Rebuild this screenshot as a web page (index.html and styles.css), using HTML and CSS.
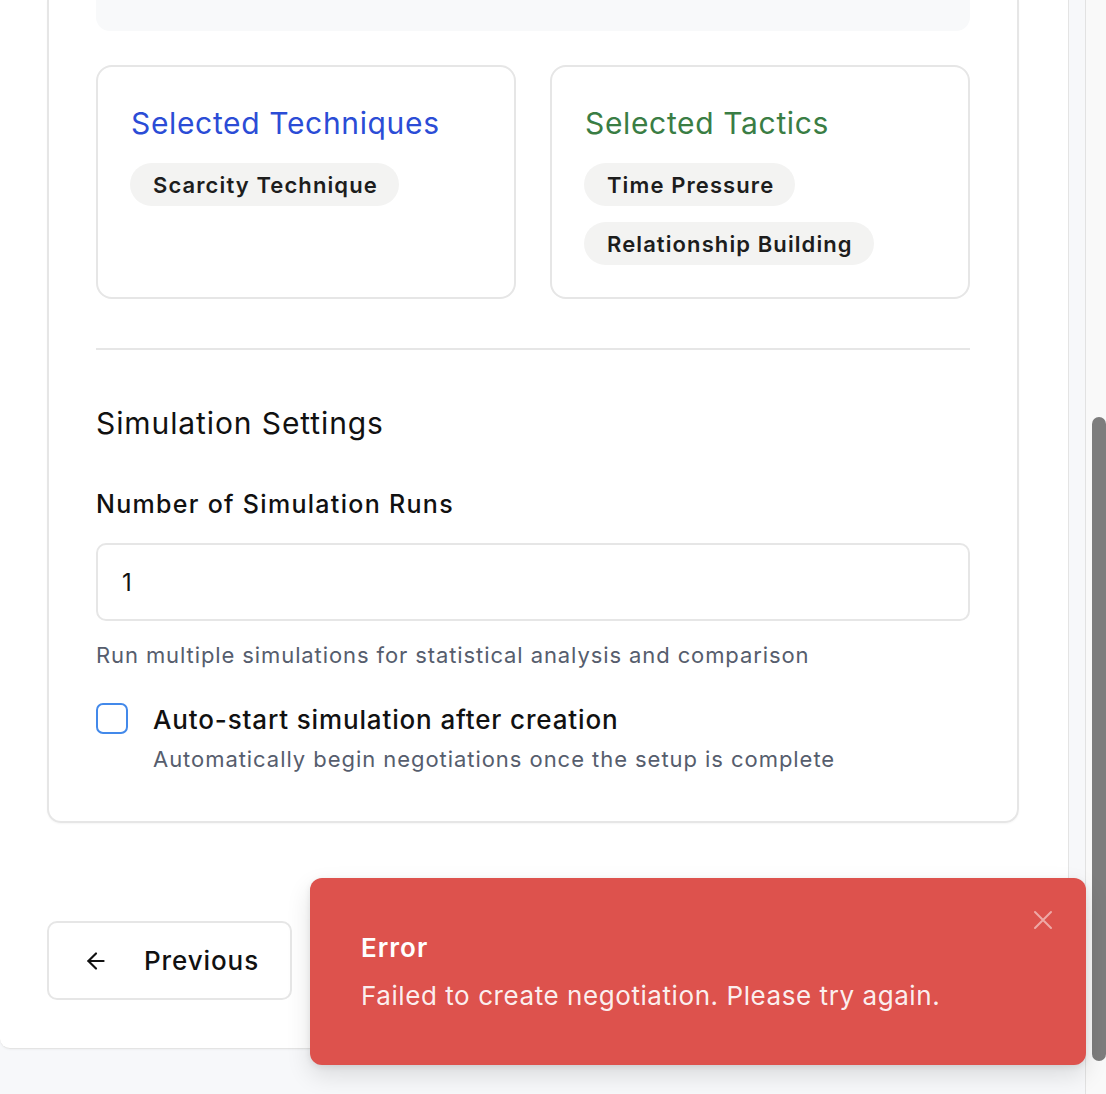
FILE: index.html
```html
<!DOCTYPE html>
<html lang="en">
<head>
<meta charset="utf-8">
<title>Negotiation Setup</title>
<link rel="stylesheet" href="styles.css">
</head>
<body>
<div class="layout">
  <div class="main-col">
    <div class="panel">
      <section class="card">
        <div class="top-box"></div>
        <div class="selected-grid">
          <div class="sel-card">
            <h3 class="sel-title blue">Selected Techniques</h3>
            <div class="chips">
              <span class="chip">Scarcity Technique</span>
            </div>
          </div>
          <div class="sel-card">
            <h3 class="sel-title green">Selected Tactics</h3>
            <div class="chips">
              <span class="chip">Time Pressure</span>
              <span class="chip">Relationship Building</span>
            </div>
          </div>
        </div>
        <hr class="divider">
        <h2 class="section-title">Simulation Settings</h2>
        <label class="field-label" for="runs">Number of Simulation Runs</label>
        <input id="runs" class="text-input" type="text" value="1">
        <p class="help">Run multiple simulations for statistical analysis and comparison</p>
        <div class="check-row">
          <span class="checkbox"></span>
          <div class="check-text">
            <div class="check-label">Auto-start simulation after creation</div>
            <div class="check-sub">Automatically begin negotiations once the setup is complete</div>
          </div>
        </div>
      </section>
      <div class="actions">
        <button class="btn-prev" type="button">
          <svg class="arrow" width="26" height="26" viewBox="0 0 24 24" fill="none" stroke="currentColor" stroke-width="2" stroke-linecap="round" stroke-linejoin="round"><path d="M19 12H5"/><path d="M12 19l-7-7 7-7"/></svg>
          <span>Previous</span>
        </button>
      </div>
    </div>
  </div>
  <div class="gutter"></div>
  <div class="scroll-track"><div class="scroll-thumb"></div></div>
</div>
<div class="toast" role="alert">
  <div class="toast-title">Error</div>
  <div class="toast-msg">Failed to create negotiation. Please try again.</div>
  <svg class="toast-close" width="20" height="20" viewBox="0 0 20 20" fill="none" stroke="currentColor" stroke-width="2" stroke-linecap="round"><path d="M2 2l16 16M18 2L2 18"/></svg>
</div>
</body>
</html>
```
FILE: styles.css
```css
* { box-sizing: border-box; }
html, body { margin: 0; padding: 0; }
body {
  width: 1106px;
  height: 1094px;
  overflow: hidden;
  background: #f7f8fa;
  font-family: Inter, "Noto Sans", "Liberation Sans", sans-serif;
  color: #111111;
  position: relative;
}
.layout { display: flex; align-items: flex-start; height: 1094px; }
.main-col { width: 1069px; flex: none; }
.panel {
  background: #ffffff;
  border-right: 1px solid #e4e4e4;
  border-bottom: 1px solid #e4e4e4;
  border-radius: 0 0 0 10px;
  height: 1049px;
  padding-left: 47px;
  box-shadow: 0 1px 2px rgba(0,0,0,0.04);
}
.gutter {
  width: 17px;
  height: 1094px;
  background: #f7f8fa;
  border-right: 1px solid #e2e2e2;
  flex: none;
}
.scroll-track {
  width: 20px;
  height: 1094px;
  background: #f9f9f9;
  flex: none;
  padding: 417px 0 0 6px;
}
.scroll-thumb {
  width: 14px;
  height: 644px;
  background: #7d7d7d;
  border-radius: 7px;
}
.card {
  width: 972px;
  border: 2px solid #e6e6e6;
  border-top: none;
  border-radius: 0 0 14px 14px;
  padding: 0 47px 47px;
  box-shadow: 0 1px 2px rgba(0,0,0,0.04);
}
.top-box {
  height: 31px;
  background: #f8f9fa;
  border-radius: 0 0 14px 14px;
}
.selected-grid {
  margin-top: 34px;
  display: grid;
  grid-template-columns: 1fr 1fr;
  gap: 34px;
}
.sel-card {
  border: 2px solid #e6e6e6;
  border-radius: 16px;
  padding: 38px 33px 32px;
}
.sel-title {
  margin: 0;
  font-size: 30px;
  line-height: 36px;
  font-weight: 400;
  letter-spacing: 0.65px;
}
.blue { color: #2b4cd6; }
.green { color: #3a7d44; }
.chips {
  margin-top: 22px;
  margin-left: -1px;
  display: flex;
  flex-direction: column;
  align-items: flex-start;
  gap: 16px;
}
.chip {
  display: inline-flex;
  align-items: center;
  height: 43px;
  padding: 0 21px 0 23px;
  border-radius: 22px;
  background: #f3f3f2;
  font-size: 22px;
  font-weight: 600;
  letter-spacing: 1.1px;
  color: #1d1d1d;
}
.divider {
  margin: 49px 0 0;
  border: none;
  height: 2px;
  background: #e6e6e6;
}
.section-title {
  margin: 55px 0 0;
  font-size: 30px;
  line-height: 36px;
  font-weight: 400;
  letter-spacing: 0.9px;
}
.field-label {
  display: block;
  margin-top: 47px;
  font-size: 25px;
  line-height: 32px;
  font-weight: 500;
  letter-spacing: 1.3px;
}
.text-input {
  display: block;
  margin-top: 23px;
  width: 100%;
  height: 78px;
  border: 2px solid #e6e6e6;
  border-radius: 10px;
  padding: 0 24px;
  font-family: inherit;
  font-size: 24px;
  color: #111;
  background: #fff;
  outline: none;
}
.help {
  margin: 19px 0 0;
  font-size: 22px;
  line-height: 30px;
  color: #565d6d;
  letter-spacing: 0.9px;
}
.check-row {
  margin-top: 33px;
  display: flex;
  align-items: flex-start;
  gap: 25px;
}
.checkbox {
  flex: none;
  width: 32px;
  height: 31px;
  border: 2px solid #4389ea;
  border-radius: 7px;
}
.check-label {
  font-size: 26px;
  line-height: 34px;
  font-weight: 500;
  letter-spacing: 0.85px;
}
.check-sub {
  margin-top: 7px;
  font-size: 22px;
  line-height: 30px;
  color: #565d6d;
  letter-spacing: 0.95px;
}
.actions {
  margin-top: 98px;
}
.btn-prev {
  display: flex;
  align-items: center;
  gap: 35px;
  width: 245px;
  height: 79px;
  padding: 0 0 0 34px;
  border: 2px solid #e6e6e6;
  border-radius: 10px;
  background: #fff;
  font-family: inherit;
  font-size: 26px;
  font-weight: 500;
  letter-spacing: 0.9px;
  color: #111;
}
.arrow { flex: none; }
.toast {
  position: absolute;
  left: 310px;
  top: 878px;
  width: 776px;
  height: 187px;
  background: #dd524d;
  border-radius: 12px;
  padding: 53px 51px 0;
  color: #ffffff;
  box-shadow: 0 10px 24px rgba(0,0,0,0.12), 0 2px 6px rgba(0,0,0,0.08);
}
.toast-title {
  font-size: 26px;
  line-height: 34px;
  font-weight: 600;
  letter-spacing: 1px;
}
.toast-msg {
  margin-top: 14px;
  font-size: 26px;
  line-height: 34px;
  letter-spacing: 0.57px;
  color: rgba(255,255,255,0.92);
}
.toast-close {
  position: absolute;
  right: 33px;
  top: 32px;
  color: rgba(255,255,255,0.5);
}
```
